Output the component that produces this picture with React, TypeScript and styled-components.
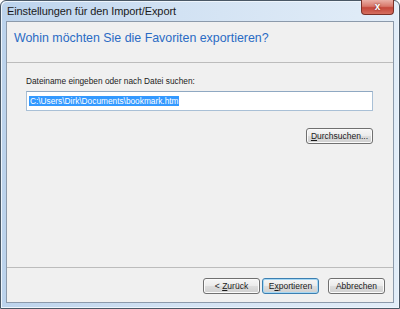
import styled, { createGlobalStyle } from "styled-components";

const GlobalStyle = createGlobalStyle`
  html, body {
    margin: 0;
    padding: 0;
    background: #ffffff;
  }
  body {
    font-family: "Liberation Sans", Arial, sans-serif;
  }
`;

const Window = styled.div`
  width: 400px;
  height: 309px;
  box-sizing: border-box;
  display: flex;
  flex-direction: column;
  padding: 0 5px 5px 5px;
  border: 1px solid #4a5866;
  border-radius: 6px 6px 0 0;
  background: linear-gradient(90deg, #bcd3ec 0%, #d2e2f3 45%, #e2edf8 100%);
  box-shadow: inset 1px 1px 0 #eef5fc, inset -1px -1px 0 #eef5fc;
`;

const TitleBar = styled.div`
  height: 20px;
  display: flex;
  align-items: flex-start;
  justify-content: space-between;
`;

const Caption = styled.span`
  font-size: 11px;
  color: #1a1a1a;
  padding: 4px 0 0 1px;
  letter-spacing: -0.1px;
`;

const CloseButton = styled.div`
  width: 31px;
  height: 14px;
  margin-top: -1px;
  border: 1px solid #7a3128;
  border-top: none;
  border-radius: 0 0 4px 4px;
  background: linear-gradient(180deg, #eab0a6 0%, #d8786b 45%, #c4473a 55%, #d56f60 100%);
  color: #ffffff;
  font-size: 10px;
  font-weight: bold;
  line-height: 13px;
  text-align: center;
  text-shadow: 0 0 2px #6b2018;
`;

const Client = styled.div`
  flex: 1;
  display: flex;
  flex-direction: column;
  background: #f0f0f0;
  border: 1px solid #8c9aab;
`;

const Header = styled.div`
  height: 41px;
  padding: 9px 0 0 7px;
  box-sizing: border-box;
  font-size: 12.4px;
  color: #2a6bc4;
  border-bottom: 1px solid #bcbcbc;
`;

const Body = styled.div`
  flex: 1;
  display: flex;
  flex-direction: column;
  padding: 13px 20px 0 19px;
`;

const Label = styled.div`
  font-size: 8.3px;
  color: #1c1c1c;
  margin-bottom: 5px;
`;

const Field = styled.div`
  width: 347px;
  height: 20px;
  box-sizing: border-box;
  display: flex;
  align-items: center;
  padding-left: 2px;
  background: #ffffff;
  border: 1px solid #a9c0d6;
  border-top-color: #8fa8c2;
`;

const Selection = styled.span`
  font-size: 8.3px;
  line-height: 10px;
  color: #ffffff;
  background: #3399ff;
  padding: 0 1px;
`;

const BrowseRow = styled.div`
  display: flex;
  justify-content: flex-end;
  width: 347px;
  margin-top: 17px;
`;

const Footer = styled.div`
  height: 35px;
  display: flex;
  justify-content: flex-end;
  align-items: flex-start;
  padding: 10px 8px 0 0;
  box-sizing: border-box;
  border-top: 1px solid #bcbcbc;
`;

const Button = styled.div<{ primary?: boolean; w: number; gap?: number }>`
  width: ${({ w }) => w}px;
  height: 16px;
  box-sizing: border-box;
  margin-left: ${({ gap }) => gap ?? 0}px;
  border: 1px solid ${({ primary }) => (primary ? "#3c7fb1" : "#707070")};
  border-radius: 3px;
  background: linear-gradient(180deg, #f6f6f6 0%, #ebebeb 48%, #dddddd 52%, #cfcfcf 100%);
  box-shadow: inset 0 0 0 1px ${({ primary }) => (primary ? "#a6d8f4" : "#fbfbfb")};
  font-size: 8.5px;
  line-height: 14px;
  text-align: center;
  color: #1a1a1a;

  u {
    text-decoration: underline;
  }
`;

export default function App() {
  return (
    <>
      <GlobalStyle />
      <Window>
        <TitleBar>
          <Caption>Einstellungen für den Import/Export</Caption>
          <CloseButton>x</CloseButton>
        </TitleBar>
        <Client>
          <Header>Wohin möchten Sie die Favoriten exportieren?</Header>
          <Body>
            <Label>Dateiname eingeben oder nach Datei suchen:</Label>
            <Field>
              <Selection>C:\Users\Dirk\Documents\bookmark.htm</Selection>
            </Field>
            <BrowseRow>
              <Button w={67}>
                <u>D</u>urchsuchen...
              </Button>
            </BrowseRow>
          </Body>
          <Footer>
            <Button w={57}>
              &lt; <u>Z</u>urück
            </Button>
            <Button w={57} gap={2} primary>
              E<u>x</u>portieren
            </Button>
            <Button w={57} gap={9}>
              Abbrechen
            </Button>
          </Footer>
        </Client>
      </Window>
    </>
  );
}
